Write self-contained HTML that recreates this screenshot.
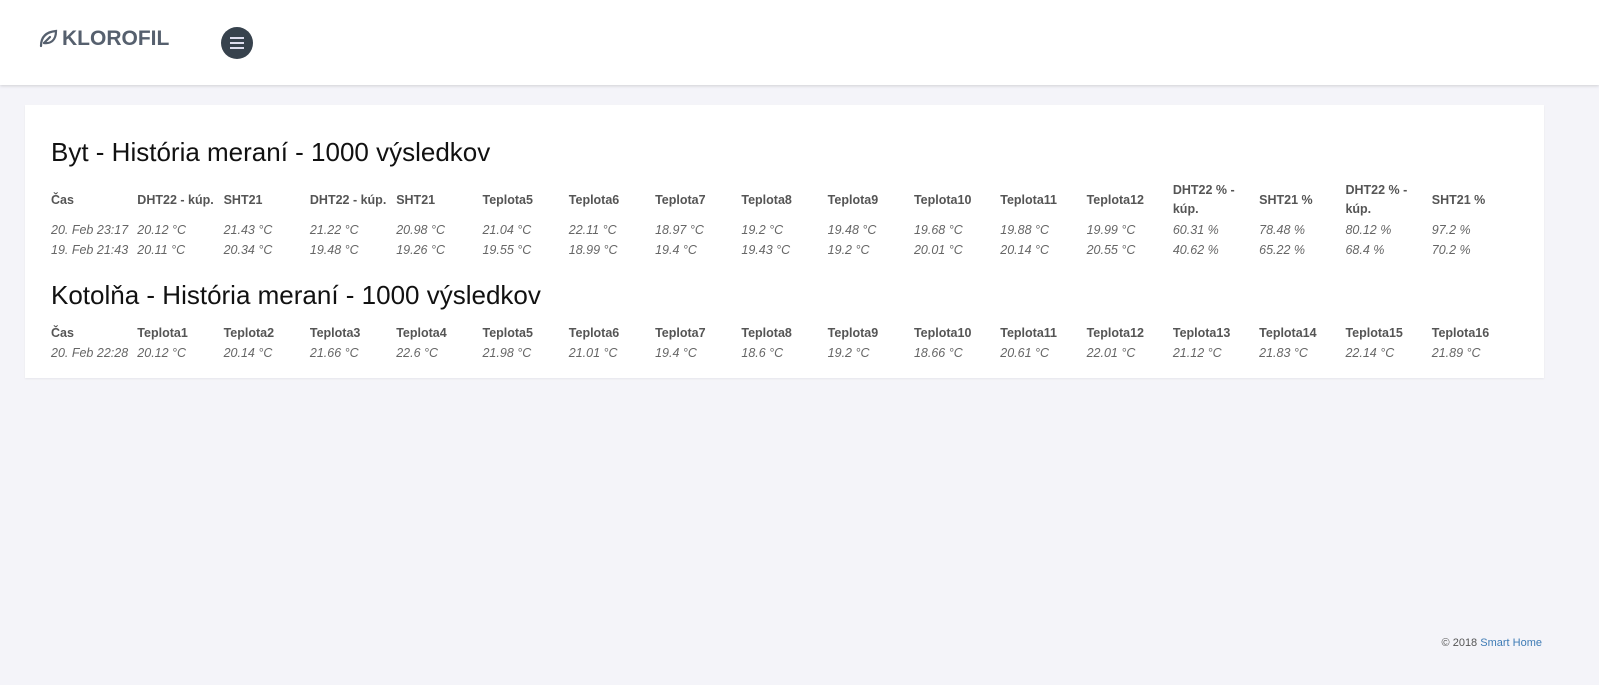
<!DOCTYPE html>
<html><head><meta charset="utf-8"><style>
*{margin:0;padding:0;box-sizing:border-box}
body{width:1599px;height:685px;background:#f4f4f9;font-family:"Liberation Sans",sans-serif;position:relative;overflow:hidden}
.nav{position:absolute;left:0;top:0;width:1599px;height:85px;background:#fff;box-shadow:0 1px 3px rgba(0,0,0,.15)}
.logo{position:absolute;left:38px;top:27px;font-weight:bold;font-size:21px;color:#56606e;letter-spacing:0}
.logo svg{vertical-align:-3px;margin-right:4px}
.burger{position:absolute;left:221px;top:27px;width:32px;height:32px;border-radius:50%;background:#37424d}
.burger i{position:absolute;left:9px;width:14px;height:1.5px;background:#dde}
.card{position:absolute;left:25px;top:105px;width:1519px;height:273px;background:#fff;box-shadow:0 1px 2px rgba(0,0,0,.06)}
h2{position:absolute;left:26px;font-weight:normal;font-size:26px;color:#111;white-space:nowrap}
table{position:absolute;left:26px;border-collapse:collapse;table-layout:fixed;width:1467px}
td,th{width:86.3px;text-align:left;font-size:12.5px;color:#666;padding:0;white-space:nowrap;overflow:visible}
th{font-weight:bold;color:#555;vertical-align:middle}
th.w{white-space:normal;line-height:19px}
td{font-style:italic;height:20px}
.foot{position:absolute;right:57px;top:637px;font-size:11px;color:#555}
.foot span{color:#3e7bb5}
</style></head><body>
<div class="nav">
<div class="logo"><svg width="20" height="20" viewBox="0 0 20 20" fill="none" stroke="#56606e" stroke-width="2.2" stroke-linecap="round"><path d="M3 18 C3 10 7 4 18 3 C18 12 13 16 6 15"/><path d="M6 15 L12 9"/></svg>KLOROFIL</div>
<div class="burger"><i style="top:10px"></i><i style="top:15px"></i><i style="top:20px"></i></div>
</div>
<div class="card">
<h2 style="top:32px">Byt - História meraní - 1000 výsledkov</h2>
<table style="top:75px">
<tr style="height:40px"><th>Čas</th><th>DHT22 - kúp.</th><th>SHT21</th><th>DHT22 - kúp.</th><th>SHT21</th><th>Teplota5</th><th>Teplota6</th><th>Teplota7</th><th>Teplota8</th><th>Teplota9</th><th>Teplota10</th><th>Teplota11</th><th>Teplota12</th><th class="w">DHT22 % - kúp.</th><th>SHT21 %</th><th class="w">DHT22 % - kúp.</th><th>SHT21 %</th></tr>
<tr><td>20. Feb 23:17</td><td>20.12 °C</td><td>21.43 °C</td><td>21.22 °C</td><td>20.98 °C</td><td>21.04 °C</td><td>22.11 °C</td><td>18.97 °C</td><td>19.2 °C</td><td>19.48 °C</td><td>19.68 °C</td><td>19.88 °C</td><td>19.99 °C</td><td>60.31 %</td><td>78.48 %</td><td>80.12 %</td><td>97.2 %</td></tr>
<tr><td>19. Feb 21:43</td><td>20.11 °C</td><td>20.34 °C</td><td>19.48 °C</td><td>19.26 °C</td><td>19.55 °C</td><td>18.99 °C</td><td>19.4 °C</td><td>19.43 °C</td><td>19.2 °C</td><td>20.01 °C</td><td>20.14 °C</td><td>20.55 °C</td><td>40.62 %</td><td>65.22 %</td><td>68.4 %</td><td>70.2 %</td></tr>
</table>
<h2 style="top:175px">Kotolňa - História meraní - 1000 výsledkov</h2>
<table style="top:218px">
<tr style="height:20px"><th>Čas</th><th>Teplota1</th><th>Teplota2</th><th>Teplota3</th><th>Teplota4</th><th>Teplota5</th><th>Teplota6</th><th>Teplota7</th><th>Teplota8</th><th>Teplota9</th><th>Teplota10</th><th>Teplota11</th><th>Teplota12</th><th>Teplota13</th><th>Teplota14</th><th>Teplota15</th><th>Teplota16</th></tr>
<tr><td>20. Feb 22:28</td><td>20.12 °C</td><td>20.14 °C</td><td>21.66 °C</td><td>22.6 °C</td><td>21.98 °C</td><td>21.01 °C</td><td>19.4 °C</td><td>18.6 °C</td><td>19.2 °C</td><td>18.66 °C</td><td>20.61 °C</td><td>22.01 °C</td><td>21.12 °C</td><td>21.83 °C</td><td>22.14 °C</td><td>21.89 °C</td></tr>
</table>
</div>
<div class="foot">© 2018 <span>Smart Home</span></div>
</body></html>
